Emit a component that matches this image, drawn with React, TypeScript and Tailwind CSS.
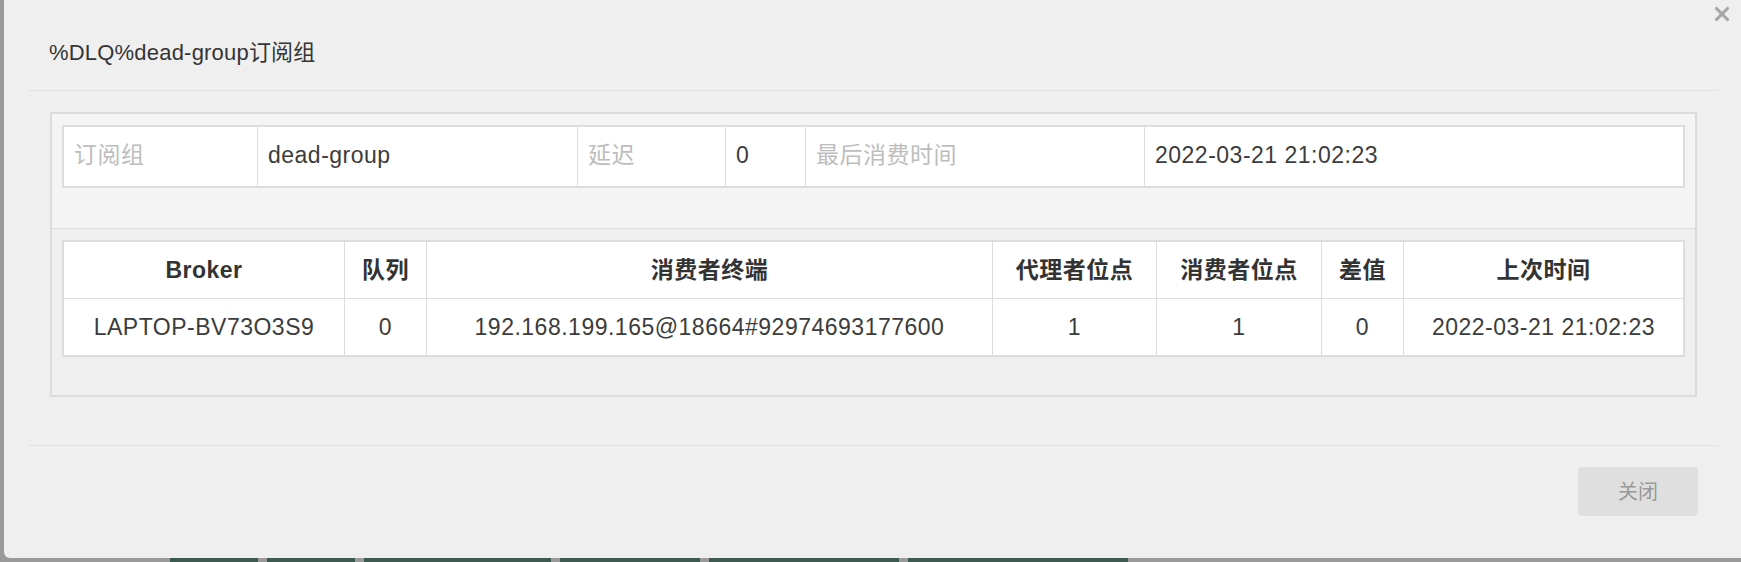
import { X } from "lucide-react"

const summary = [
  { label: "订阅组", value: "dead-group" },
  { label: "延迟", value: "0" },
  { label: "最后消费时间", value: "2022-03-21 21:02:23" },
]

const headers = ["Broker", "队列", "消费者终端", "代理者位点", "消费者位点", "差值", "上次时间"]

const rows = [
  ["LAPTOP-BV73O3S9", "0", "192.168.199.165@18664#92974693177600", "1", "1", "0", "2022-03-21 21:02:23"],
]

const font = "font-['Liberation_Sans','Noto_Sans_CJK_SC',sans-serif]"

export default function App() {
  return (
    <div className={`flex h-[562px] w-full flex-col overflow-hidden bg-[#9a9a9a] ${font}`}>
      <div className="relative ml-[4px] flex h-[558px] flex-col rounded-bl-[6px] bg-[#efefef]">
        <button className="absolute right-[8px] top-[3px] text-[#a6a6a6]">
          <X className="h-[22px] w-[22px]" strokeWidth={3.4} />
        </button>

        {/* header */}
        <div className="ml-[25px] mr-[23px] h-[91px] border-b border-[#e2e2e2] pl-[20px] pt-[38px]">
          <h4 className="text-[22px] leading-[30px] tracking-[0.2px] text-[#353535]">
            %DLQ%dead-group订阅组
          </h4>
        </div>

        {/* body */}
        <div className="ml-[46px] mr-[44px] pt-[21px]">
          <div className="border-2 border-[#dcdcdc]">
            <div className="bg-[#f4f4f4] px-[10px] pb-[40px] pt-[11px]">
              <div className="grid grid-cols-[193px_320px_148px_80px_339px_1fr] border-2 border-[#dddddd] bg-white text-[23px] tracking-[0.5px]">
                {summary.map((item, i) => (
                  <div key={item.label} className="contents">
                    <div className={`flex h-[59px] items-center px-[10px] pb-[3px] text-[#bdbdbd] ${i > 0 ? "border-l border-[#dddddd]" : ""}`}>
                      {item.label}
                    </div>
                    <div className="flex h-[59px] items-center border-l border-[#dddddd] px-[10px] pb-[3px] text-[#3c3c3c]">
                      {item.value}
                    </div>
                  </div>
                ))}
              </div>
            </div>

            <div className="border-t border-[#dddddd] bg-[#efefef] px-[10px] pb-[38px] pt-[11px]">
              <div className="border-2 border-[#dddddd] bg-white text-[23px] tracking-[0.5px] text-[#3c3c3c]">
                <div className="grid h-[57px] grid-cols-[280px_82px_566px_164px_165px_82px_1fr] border-b border-[#dddddd]">
                  {headers.map((h, i) => (
                    <div
                      key={h}
                      className={`flex items-center justify-center font-bold text-[#333333] ${i > 0 ? "border-l border-[#dddddd]" : ""}`}
                    >
                      {h}
                    </div>
                  ))}
                </div>
                {rows.map((row) => (
                  <div key={row[2]} className="grid h-[56px] grid-cols-[280px_82px_566px_164px_165px_82px_1fr]">
                    {row.map((cell, i) => (
                      <div
                        key={i}
                        className={`flex items-center justify-center ${i > 0 ? "border-l border-[#dddddd]" : ""}`}
                      >
                        {cell}
                      </div>
                    ))}
                  </div>
                ))}
              </div>
            </div>
          </div>
        </div>

        {/* footer */}
        <div className="ml-[25px] mr-[23px] mt-[48px] flex justify-end border-t border-[#e2e2e2] pr-[20px] pt-[21px]">
          <button className="h-[49px] w-[120px] rounded-[4px] bg-[#dfdfdf] text-[20px] text-[#999999]">
            关闭
          </button>
        </div>
      </div>

      <div className="flex h-[4px] gap-[9px] pl-[170px]">
        <div className="w-[88px] bg-[#3d5a51]" />
        <div className="w-[88px] bg-[#3d5a51]" />
        <div className="w-[187px] bg-[#3d5a51]" />
        <div className="w-[140px] bg-[#3d5a51]" />
        <div className="w-[190px] bg-[#3d5a51]" />
        <div className="w-[220px] bg-[#3d5a51]" />
      </div>
    </div>
  )
}
